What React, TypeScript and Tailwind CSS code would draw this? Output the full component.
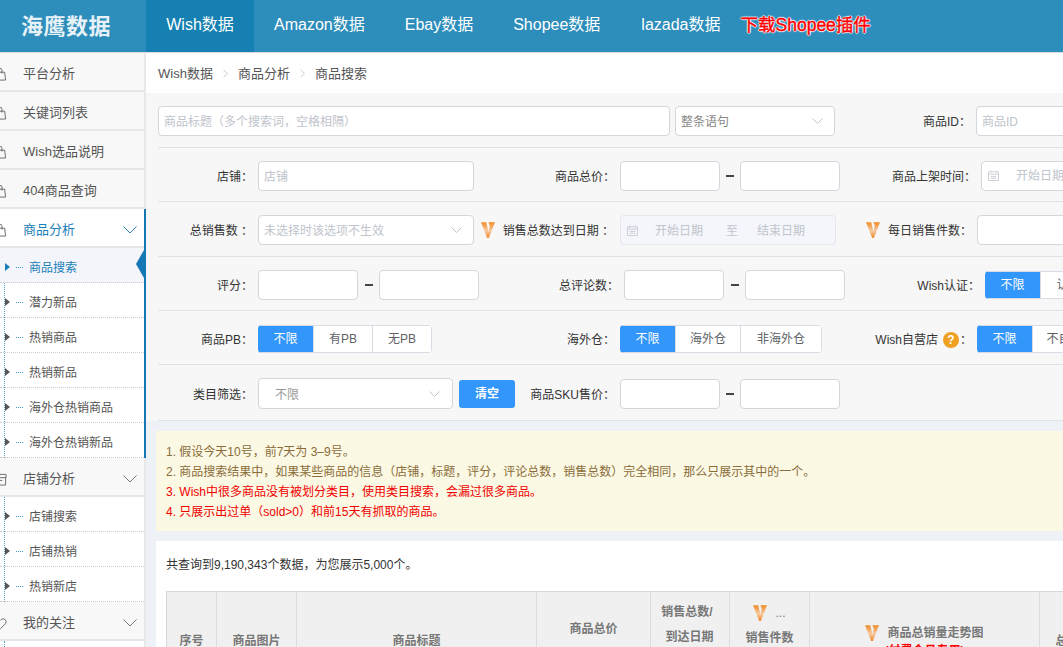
import React from "react";

const Vip = ({ className = "" }: { className?: string }) => (
  <svg viewBox="0 0 16 20" className={className}>
    <defs>
      <linearGradient id="vg" x1="0" y1="0" x2="0" y2="1">
        <stop offset="0" stopColor="#f08a24" />
        <stop offset="0.55" stopColor="#f8c9a0" />
        <stop offset="1" stopColor="#ee8a2a" />
      </linearGradient>
    </defs>
    <path d="M0 1 L6 1 L8.5 12 L10 5 L8.5 1 L16 1 L9 19 L7 19 Z" fill="url(#vg)" />
  </svg>
);

const Bag = () => (
  <svg viewBox="0 0 14 14" className="w-[13px] h-[13px] ml-[-6px] mr-[16px] shrink-0" fill="none" stroke="#666" strokeWidth="1">
    <path d="M1 4.5h10.5l1 8.5H0z" />
    <path d="M4 6V2.5a2.3 2.3 0 0 1 4.6 0V6" />
  </svg>
);

const Store = () => (
  <svg viewBox="0 0 14 14" className="w-[13px] h-[13px] ml-[-6px] mr-[16px] shrink-0" fill="none" stroke="#666" strokeWidth="1">
    <path d="M1 1.5h12v3.5H1zM1.5 5v8h11V5M5 8h4" />
  </svg>
);

const Heart = () => (
  <svg viewBox="0 0 14 14" className="w-[13px] h-[13px] ml-[-6px] mr-[16px] shrink-0" fill="none" stroke="#666" strokeWidth="1">
    <path d="M7 12.5 1.6 7.2a3.2 3.2 0 0 1 4.5-4.5L7 3.6l.9-.9a3.2 3.2 0 0 1 4.5 4.5z" />
  </svg>
);

const Chevron = ({ color = "#777" }: { color?: string }) => (
  <svg viewBox="0 0 14 8" className="w-[14px] h-[8px] shrink-0" fill="none" stroke={color} strokeWidth="1">
    <path d="M.5.5 7 7 13.5.5" />
  </svg>
);

const Calendar = () => (
  <svg viewBox="0 0 12 12" className="w-[11px] h-[11px] shrink-0" fill="none" stroke="#c8ccd4" strokeWidth="1">
    <path d="M.5 2h11v9.5H.5zM.5 4.5h11M3 .5v2M9 .5v2M3 7h6M3 9h6" />
  </svg>
);

const Crumb = () => (
  <svg viewBox="0 0 6 10" className="w-[5px] h-[9px] mx-[10px] shrink-0" fill="none" stroke="#c4c4c4" strokeWidth="1">
    <path d="M.5.5 5.5 5 .5 9.5" />
  </svg>
);

const Top = ({ icon, label, active, chev }: { icon: React.ReactNode; label: string; active?: boolean; chev?: boolean }) => (
  <div className={`h-[39px] flex items-center pt-[5px] pr-[7px] border-b-2 border-[#e6e6e6] text-[13px] ${active ? "bg-white text-[#1b7fb9]" : "bg-[#f8f8f8] text-[#555]"}`}>
    {icon}
    <span className="flex-1">{label}</span>
    {chev && <Chevron color={active ? "#2a83bd" : "#777"} />}
  </div>
);

const Sub = ({ label, active }: { label: string; active?: boolean }) => (
  <div className={`relative h-[35px] flex items-center pt-[5px] pl-[29px] text-[12px] border-b border-dotted border-[#ccc] ${active ? "bg-[#f3f5fa] text-[#1b7fb9]" : "bg-transparent text-[#555]"}`}>
    <span className={`absolute left-[5px] top-[15px] border-y-[4px] border-y-transparent border-l-[5px] ${active ? "border-l-[#1b7fb9]" : "border-l-[#555]"}`} />
    <span className="absolute left-[16px] top-[19px] w-[7px] border-t border-dotted border-[#3d94c6]" />
    {label}
    {active && <span className="absolute right-0 top-[2px] border-y-[14px] border-y-transparent border-r-[8px] border-r-[#1578b5]" />}
  </div>
);

const Group = ({ children }: { children: React.ReactNode }) => (
  <div className="relative">
    <span className="absolute left-[4px] top-0 bottom-0 border-l border-dotted border-[#5a9fc9]" />
    {children}
  </div>
);

const Sidebar = () => (
  <aside className="w-[146px] shrink-0 bg-white border-r-2 border-r-[#e8e8e8]">
    <Top icon={<Bag />} label="平台分析" />
    <Top icon={<Bag />} label="关键词列表" />
    <Top icon={<Bag />} label="Wish选品说明" />
    <Top icon={<Bag />} label="404商品查询" />
    <div className="relative">
      <Top icon={<Bag />} label="商品分析" active chev />
      <Group>
        <Sub label="商品搜索" active />
        <Sub label="潜力新品" />
        <Sub label="热销商品" />
        <Sub label="热销新品" />
        <Sub label="海外仓热销商品" />
        <Sub label="海外仓热销新品" />
      </Group>
      <span className="absolute top-0 bottom-0 right-[-2px] w-[2px] bg-[#1578b5]" />
    </div>
    <Top icon={<Store />} label="店铺分析" chev />
    <Group>
      <Sub label="店铺搜索" />
      <Sub label="店铺热销" />
      <Sub label="热销新店" />
    </Group>
    <Top icon={<Heart />} label="我的关注" chev />
    <Group>
      <div className="h-[10px]" />
    </Group>
  </aside>
);

const Label = ({ w, flush, children }: { w: string; flush?: boolean; children: React.ReactNode }) => (
  <div className={`${w} shrink-0 flex items-center justify-end pt-[2px] text-[12px] text-[#333] whitespace-nowrap`}>
    <span className={`flex items-center ${flush ? "" : "mr-[-5px]"}`}>{children}</span>
  </div>
);

const Input = ({ w, ph }: { w: string; ph?: string }) => (
  <div className={`${w} h-[30px] shrink-0 bg-white border border-[#d3d6dc] rounded-[4px] flex items-center pt-[2px] px-[5px] text-[12px] text-[#c0c4cc] whitespace-nowrap overflow-hidden`}>{ph}</div>
);

const Range = ({ wide }: { wide?: boolean }) => (
  <div className="flex items-center shrink-0">
    <Input w="w-[100px]" />
    <span className={`${wide ? "w-[21px]" : "w-[20px]"} flex justify-center`}>
      <span className="w-[8px] h-[2px] bg-[#444]" />
    </span>
    <Input w="w-[100px]" />
  </div>
);

const Select = ({ w, ph, dark }: { w: string; ph: string; dark?: boolean }) => (
  <div className={`${w} h-[30px] shrink-0 bg-white border border-[#d3d6dc] rounded-[4px] flex items-center justify-between pl-[5px] pr-[11px] text-[12px] ${dark ? "text-[#888]" : "text-[#c0c4cc]"}`}>
    <span className="pt-[2px]">{ph}</span>
    <svg viewBox="0 0 11 6" className="w-[11px] h-[6px]" fill="none" stroke="#c0c4cc"><path d="M.5.5 5.5 5.5 10.5.5" /></svg>
  </div>
);

const Seg = ({ items }: { items: { t: string; w: string }[] }) => (
  <div className="flex shrink-0 h-[28px] rounded-[4px] overflow-hidden text-[12px]">
    {items.map((it, i) => (
      <div key={it.t} className={`${it.w} flex items-center justify-center pt-[1px] whitespace-nowrap border-y border-r border-[#d8dce5] ${i === 0 ? "bg-[#3296fa] border-[#3296fa] text-white" : "bg-white text-[#606266]"}`}>
        {it.t}
      </div>
    ))}
  </div>
);

const DatePick = ({ w, disabled, end }: { w: string; disabled?: boolean; end?: boolean }) => (
  <div className={`${w} h-[30px] shrink-0 border rounded-[4px] flex items-center pl-[6px] text-[12px] text-[#c0c4cc] whitespace-nowrap overflow-hidden ${disabled ? "bg-[#f4f6fb] border-[#e4e7ed]" : "bg-white border-[#d3d6dc]"}`}>
    <Calendar />
    <span className="ml-[17px] pt-[1px]">开始日期</span>
    {end && <span className="ml-[23px] pt-[1px]">至</span>}
    {end && <span className="ml-[19px] pt-[1px]">结束日期</span>}
  </div>
);

const Gap = ({ w }: { w: string }) => <div className={`${w} shrink-0`} />;

const Row = ({ children, h, pt = "pt-[2px]" }: { children: React.ReactNode; h: string; pt?: string }) => (
  <div className={`${h} ${pt} flex items-center shrink-0 border-b border-[#e2e2e2]`}>{children}</div>
);

const Th = ({ w, pt, children }: { w: string; pt: string; children: React.ReactNode }) => (
  <div className={`${w} ${pt} shrink-0 h-full border-r border-[#dcdcdc] flex flex-col items-center justify-start text-[12px] font-bold text-[#777] overflow-hidden whitespace-nowrap`}>{children}</div>
);

export default function App() {
  return (
    <div className="w-[1063px] h-[647px] overflow-hidden flex flex-col bg-[#eef1f6] font-['Liberation_Sans','Noto_Sans_CJK_SC',sans-serif]">
      <header className="h-[53px] shrink-0 flex bg-[#2d8dbb] border-b border-[#d9dde2] text-white text-[16px]">
        <div className="w-[146px] pl-[21px] flex items-center text-[22px] font-bold tracking-[0.5px] text-[#e6f2f7]">海鹰数据</div>
        <div className="w-[108px] pb-[2px] flex items-center justify-center bg-[#1580b1]">Wish数据</div>
        <div className="flex items-center pb-[2px] pl-[20px]">Amazon数据</div>
        <div className="flex items-center pb-[2px] pl-[40px]">Ebay数据</div>
        <div className="flex items-center pb-[2px] pl-[40px]">Shopee数据</div>
        <div className="flex items-center pb-[2px] pl-[41px]">lazada数据</div>
        <div className="flex items-center pb-[2px] pl-[20px] text-[17.5px] text-[#ff0000] [-webkit-text-stroke:0.4px_#f00] [text-shadow:0_0_1px_#fff,0_0_2px_#fff,1px_0_1px_#fff,-1px_0_1px_#fff,0_1px_1px_#fff,0_-1px_1px_#fff]">下载Shopee插件</div>
      </header>
      <div className="flex flex-1 min-h-0">
        <Sidebar />
        <main className="flex-1 min-w-0 overflow-hidden">
          <div className="h-[40px] bg-white flex items-center pl-[12px] pt-[1px] text-[13px] text-[#555]">
            <span>Wish数据</span>
            <Crumb />
            <span>商品分析</span>
            <Crumb />
            <span>商品搜索</span>
          </div>
          <section className="bg-[#f7f7f7] w-[917px] pl-[12px]">
            <Row h="h-[55px]" pt="pt-[1px]">
              <Input w="w-[512px]" ph="商品标题（多个搜索词，空格相隔）" />
              <Gap w="w-[5px]" />
              <Select w="w-[160px]" ph="整条语句" dark />
              <Label w="w-[131px]">商品ID：</Label>
              <Gap w="w-[10px]" />
              <Input w="w-[120px]" ph="商品ID" />
            </Row>
            <Row h="h-[54px]">
              <Label w="w-[90px]">店铺：</Label>
              <Gap w="w-[10px]" />
              <Input w="w-[216px]" ph="店铺" />
              <Label w="w-[136px]">商品总价：</Label>
              <Gap w="w-[10px]" />
              <Range />
              <Label w="w-[131px]">商品上架时间：</Label>
              <Gap w="w-[10px]" />
              <DatePick w="w-[120px]" />
            </Row>
            <Row h="h-[55px]">
              <Label w="w-[90px]"><span className="whitespace-pre">总销售数 ：</span></Label>
              <Gap w="w-[10px]" />
              <Select w="w-[216px]" ph="未选择时该选项不生效" />
              <Vip className="w-[14px] h-[18px] ml-[7px] mr-[8px] shrink-0" />
              <Label w="w-[111px]" flush>销售总数达到日期 ：</Label>
              <Gap w="w-[6px]" />
              <DatePick w="w-[216px]" disabled end />
              <Vip className="w-[14px] h-[18px] ml-[30px] mr-[8px] shrink-0" />
              <Label w="w-[84px]" flush>每日销售件数：</Label>
              <Gap w="w-[5px]" />
              <Input w="w-[100px]" />
            </Row>
            <Row h="h-[54px]">
              <Label w="w-[90px]">评分：</Label>
              <Gap w="w-[10px]" />
              <Range wide />
              <Label w="w-[135px]">总评论数：</Label>
              <Gap w="w-[10px]" />
              <Range wide />
              <Label w="w-[130px]">Wish认证：</Label>
              <Gap w="w-[10px]" />
              <Seg items={[{ t: "不限", w: "w-[56px]" }, { t: "认证", w: "w-[56px]" }]} />
            </Row>
            <Row h="h-[54px]">
              <Label w="w-[90px]">商品PB：</Label>
              <Gap w="w-[10px]" />
              <Seg items={[{ t: "不限", w: "w-[56px]" }, { t: "有PB", w: "w-[59px]" }, { t: "无PB", w: "w-[59px]" }]} />
              <Label w="w-[178px]">海外仓：</Label>
              <Gap w="w-[10px]" />
              <Seg items={[{ t: "不限", w: "w-[56px]" }, { t: "海外仓", w: "w-[65px]" }, { t: "非海外仓", w: "w-[81px]" }]} />
              <Label w="w-[145px]">
                Wish自营店
                <span className="w-[16px] h-[16px] ml-[5px] mr-[1px] rounded-full bg-[#f0a020] text-white font-bold text-[12px] flex items-center justify-center">?</span>：
              </Label>
              <Gap w="w-[10px]" />
              <Seg items={[{ t: "不限", w: "w-[56px]" }, { t: "不自营", w: "w-[64px]" }]} />
            </Row>
            <Row h="h-[56px]">
              <Label w="w-[90px]">类目筛选：</Label>
              <Gap w="w-[10px]" />
              <div className="w-[195px] shrink-0 h-[31px] bg-white border border-[#d3d6dc] rounded-[4px] flex items-center justify-between pl-[16px] pr-[12px] text-[12px] text-[#999]">
                <span className="pt-[2px]">不限</span>
                <svg viewBox="0 0 11 6" className="w-[11px] h-[6px]" fill="none" stroke="#c0c4cc"><path d="M.5.5 5.5 5.5 10.5.5" /></svg>
              </div>
              <Gap w="w-[6px]" />
              <div className="w-[56px] h-[28px] pt-[1px] shrink-0 rounded-[3px] bg-[#3296fa] text-white text-[12px] font-bold flex items-center justify-center">清空</div>
              <Label w="w-[95px]">商品SKU售价：</Label>
              <Gap w="w-[10px]" />
              <Range />
            </Row>
          </section>
          <div className="h-[10px]" />
          <div className="ml-[10px] w-[907px] h-[100px] pt-[2px] bg-[#fbf8e3] px-[10px] flex flex-col justify-center text-[12px] leading-[20px] text-[#8a6d3b] whitespace-nowrap">
            <p>1. 假设今天10号，前7天为 3–9号。</p>
            <p>2. 商品搜索结果中，如果某些商品的信息（店铺，标题，评分，评论总数，销售总数）完全相同，那么只展示其中的一个。</p>
            <p className="text-[#f00000]">3. Wish中很多商品没有被划分类目，使用类目搜索，会漏过很多商品。</p>
            <p className="text-[#f00000]">4. 只展示出过单（sold&gt;0）和前15天有抓取的商品。</p>
          </div>
          <div className="h-[10px]" />
          <div className="ml-[10px] w-[907px] h-[200px] bg-white pl-[10px]">
            <div className="h-[50px] pb-[2px] flex items-center text-[12px] text-[#333] whitespace-nowrap">共查询到9,190,343个数据，为您展示5,000个。</div>
            <div className="h-[100px] flex bg-[#f0f0f0] border border-[#d8d8d8] w-[960px]">
              <Th w="w-[50px]" pt="pt-[40px]"><span>序号</span></Th>
              <Th w="w-[80px]" pt="pt-[40px]"><span>商品图片</span></Th>
              <Th w="w-[240px]" pt="pt-[40px]"><span>商品标题</span></Th>
              <Th w="w-[114px]" pt="pt-[28px]"><span>商品总价</span><span className="mt-[10px]">（售价+运费）</span></Th>
              <Th w="w-[79px]" pt="pt-[11px]"><span className="mr-[6px]">销售总数/</span><span className="mt-[7px] mr-[1px]">到达日期</span></Th>
              <Th w="w-[80px]" pt="pt-[12px]">
                <span className="flex items-center"><Vip className="w-[14px] h-[18px] mr-[8px]" /><span className="font-normal">...</span></span>
                <span className="mt-[7px]">销售件数</span>
              </Th>
              <Th w="w-[230px]" pt="pt-[32px]">
                <span className="flex items-center"><Vip className="w-[14px] h-[18px] mr-[8px]" />商品总销量走势图</span>
                <span className="text-[#f00]">(付费会员专用)</span>
              </Th>
              <Th w="w-[80px]" pt="pt-[40px]"><span>总评论数</span></Th>
            </div>
          </div>
        </main>
      </div>
    </div>
  );
}
